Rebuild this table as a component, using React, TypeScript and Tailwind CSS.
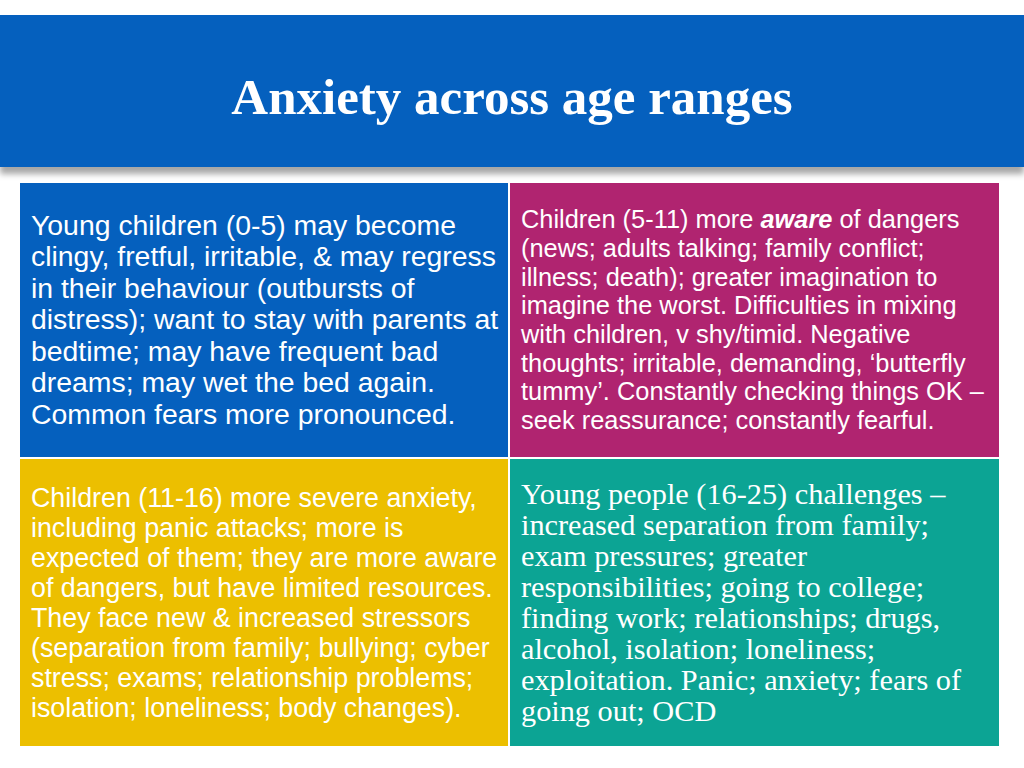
const cells = [
  {
    bg: 'bg-[#0560be]',
    font: 'font-["Liberation_Sans",Arial,sans-serif] text-[28.4px] leading-[31.5px]',
    lines: [
      'Young children (0-5) may become',
      'clingy, fretful, irritable, & may regress',
      'in their behaviour (outbursts of',
      'distress); want to stay with parents at',
      'bedtime; may have frequent bad',
      'dreams; may wet the bed again.',
      'Common fears more pronounced.',
    ],
  },
  {
    bg: 'bg-[#b02470]',
    font: 'font-["Liberation_Sans",Arial,sans-serif] text-[25.4px] leading-[28.7px]',
    lines: [
      'AWARE',
      '(news; adults talking; family conflict;',
      'illness; death); greater imagination to',
      'imagine the worst. Difficulties in mixing',
      'with children, v shy/timid. Negative',
      'thoughts; irritable, demanding, \u2018butterfly',
      'tummy\u2019. Constantly checking things OK \u2013',
      'seek reassurance; constantly fearful.',
    ],
  },
  {
    bg: 'bg-[#ecbf00]',
    font: 'font-["Liberation_Sans",Arial,sans-serif] text-[26.8px] leading-[30px]',
    lines: [
      'Children (11-16) more severe anxiety,',
      'including panic attacks; more is',
      'expected of them; they are more aware',
      'of dangers, but have limited resources.',
      'They face new & increased stressors',
      '(separation from family; bullying; cyber',
      'stress; exams; relationship problems;',
      'isolation; loneliness; body changes).',
    ],
  },
  {
    bg: 'bg-[#0ca494]',
    font: 'font-["Liberation_Serif","Times_New_Roman",serif] text-[30.3px] leading-[31px]',
    lines: [
      'Young people (16-25) challenges \u2013',
      'increased separation from family;',
      'exam pressures; greater',
      'responsibilities; going to college;',
      'finding work; relationships; drugs,',
      'alcohol, isolation; loneliness;',
      'exploitation. Panic; anxiety; fears of',
      'going out; OCD',
    ],
  },
];

export default function App() {
  return (
    <div className="w-[1024px] h-[768px] bg-white pt-[15px] overflow-hidden">
      <header className="h-[152px] bg-[#0560be] flex items-center justify-center pt-[13px] shadow-[0_7px_6px_rgba(0,0,0,0.35)]">
        <h1 className='font-["Liberation_Serif","Times_New_Roman",serif] font-bold text-[51px] leading-none text-white'>
          Anxiety across age ranges
        </h1>
      </header>

      <div className="mt-[16px] ml-[20px] w-[979px] h-[563px] grid grid-cols-[488px_489px] grid-rows-[274px_287px] gap-[2px] bg-white">
        {cells.map((c, i) => (
          <div key={i} className={`${c.bg} flex flex-col justify-center pl-[11px] text-white whitespace-nowrap`}>
            <div className={c.font}>
              {c.lines.map((l, j) =>
                l === 'AWARE' ? (
                  <div key={j}>
                    Children (5-11) more <b className="italic">aware</b> of dangers
                  </div>
                ) : (
                  <div key={j}>{l}</div>
                ),
              )}
            </div>
          </div>
        ))}
      </div>
    </div>
  );
}
